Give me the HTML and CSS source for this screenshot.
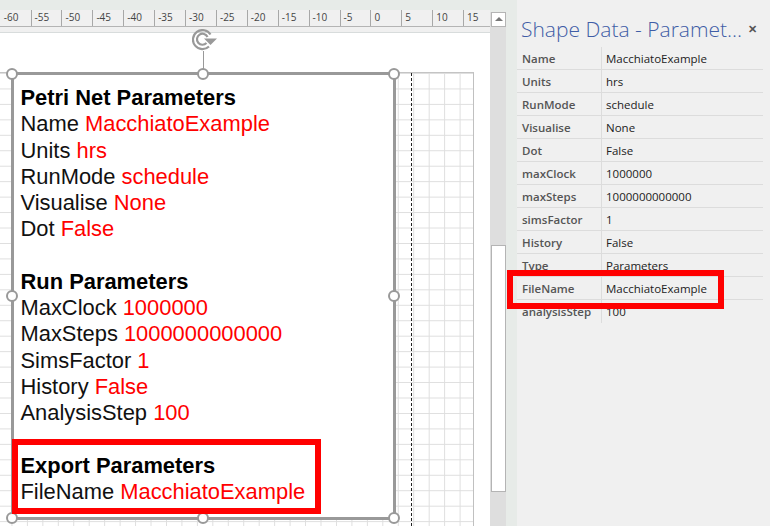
FILE: index.html
```html
<!DOCTYPE html>
<html lang="en">
<head>
    <meta charset="UTF-8">
    <title>Shape Data - Parameters</title>
    <link rel="stylesheet" href="styles.css">
</head>
<body>
    <div class="topbar"></div>
    <div class="workspace">
        <div class="editor">
            <div class="ruler">
                <span class="tick">-60</span><span class="tick">-55</span><span class="tick">-50</span><span class="tick">-45</span><span class="tick">-40</span><span class="tick">-35</span><span class="tick">-30</span><span class="tick">-25</span><span class="tick">-20</span><span class="tick">-15</span><span class="tick">-10</span><span class="tick">-5</span><span class="tick">0</span><span class="tick">5</span><span class="tick">10</span><span class="tick">15</span>
            </div>
            <div class="canvas">
                <div class="page"></div>
                <div class="margin-line"></div>
                <div class="shape">
                    <p class="head">Petri Net Parameters</p>
                    <p>Name <span class="val">MacchiatoExample</span></p>
                    <p>Units <span class="val">hrs</span></p>
                    <p>RunMode <span class="val">schedule</span></p>
                    <p>Visualise <span class="val">None</span></p>
                    <p>Dot <span class="val">False</span></p>
                    <p>&nbsp;</p>
                    <p class="head">Run Parameters</p>
                    <p>MaxClock <span class="val">1000000</span></p>
                    <p>MaxSteps <span class="val">1000000000000</span></p>
                    <p>SimsFactor <span class="val">1</span></p>
                    <p>History <span class="val">False</span></p>
                    <p>AnalysisStep <span class="val">100</span></p>
                    <p>&nbsp;</p>
                    <p class="head">Export Parameters</p>
                    <p>FileName <span class="val">MacchiatoExample</span></p>
                </div>
                <svg class="rotate" width="26" height="22" viewBox="0 0 26 22">
                    <path d="M18.500 5.500A9.500 9.500 0 1 0 17 17.500" fill="none" stroke="#999" stroke-width="2.200"/>
                    <path d="M15.500 8A5.500 5.500 0 1 0 14.500 14" fill="none" stroke="#999" stroke-width="2.200"/>
                    <path d="M12 9.500h13l-6.500 6.500z" fill="#999"/>
                </svg>
                <div class="stem"></div>
                <i class="handle h1"></i><i class="handle h2"></i><i class="handle h3"></i>
                <i class="handle h4"></i><i class="handle h5"></i>
                <i class="handle h6"></i><i class="handle h7"></i><i class="handle h8"></i>
                <div class="callout callout-left"></div>
            </div>
        </div>
        <div class="scrollbar">
            <div class="scroll-up"></div>
            <div class="scroll-thumb"></div>
        </div>
        <div class="panel">
            <div class="panel-title">
                <span>Shape Data - Paramet...</span>
                <span class="close">&#10005;</span>
            </div>
            <div class="rows">
                <div class="row"><b>Name</b><span>MacchiatoExample</span></div>
                <div class="row"><b>Units</b><span>hrs</span></div>
                <div class="row"><b>RunMode</b><span>schedule</span></div>
                <div class="row"><b>Visualise</b><span>None</span></div>
                <div class="row"><b>Dot</b><span>False</span></div>
                <div class="row"><b>maxClock</b><span>1000000</span></div>
                <div class="row"><b>maxSteps</b><span>1000000000000</span></div>
                <div class="row"><b>simsFactor</b><span>1</span></div>
                <div class="row"><b>History</b><span>False</span></div>
                <div class="row"><b>Type</b><span>Parameters</span></div>
                <div class="row"><b>FileName</b><span>MacchiatoExample</span></div>
                <div class="row last"><b>analysisStep</b><span>100</span></div>
            </div>
        </div>
    </div>
    <div class="callout callout-right"></div>
</body>
</html>
```

FILE: styles.css
```css
* {
    box-sizing: border-box;
}
html, body {
    height: 100%;
}
body {
    margin: 0;
    width: 770px;
    height: 526px;
    overflow: hidden;
    position: relative;
    background-color: #e7ebe8;
    font-family: "Liberation Sans", Arial, sans-serif;
}
.topbar {
    height: 10px;
}
.workspace {
    display: flex;
    height: 516px;
}

/* ruler + drawing area */
.editor {
    width: 490px;
    display: flex;
    flex-direction: column;
}
.ruler {
    height: 17px;
    display: flex;
    margin-left: -0.3px;
    background-color: #f0f0f0;
    border-bottom: 1px solid #b4b4b4;
    flex-shrink: 0;
    overflow: hidden;
}
.tick {
    width: 30.9px;
    flex-shrink: 0;
    border-left: 1px solid #a8a8a8;
    padding-left: 3px;
    font-size: 10px;
    line-height: 15px;
    color: #444;
    font-family: "Open Sans", sans-serif;
}
.tick:first-child {
    border-left: none;
    padding-left: 4px;
}
.canvas {
    position: relative;
    flex: 1;
    background-color: #fff;
    border-top: 5px solid #f0f0f0;
    box-shadow: inset 0 1px #d8dcdc;
}
.page {
    position: absolute;
    left: -4px;
    top: 40px;
    width: 478px;
    height: 460px;
    border-top: 1px solid #c4c4c4;
    border-right: 1px solid #c0c0c0;
    background-image:
        linear-gradient(to right, #dedede 1px, transparent 1px),
        linear-gradient(to bottom, #dedede 1px, transparent 1px);
    background-size: 15.46px 15.46px;
}
.margin-line {
    position: absolute;
    left: 411px;
    top: 41px;
    width: 1px;
    height: 460px;
    background-image: repeating-linear-gradient(to bottom, #222 0 3px, transparent 3px 5px);
}
.shape {
    position: absolute;
    left: 11px;
    top: 40px;
    width: 385px;
    height: 448px;
    background-color: #fff;
    border: 3.5px solid #999;
    padding: 10px 0 0 6.5px;
    font-size: 21.9px;
    line-height: 26.25px;
    color: #111;
}
.shape p {
    margin: 0;
    white-space: nowrap;
}
.head {
    font-weight: bold;
    color: #000;
}
.val {
    color: #f00;
}
.rotate {
    position: absolute;
    left: 192px;
    top: -3px;
}
.stem {
    position: absolute;
    left: 203px;
    top: 19px;
    width: 1px;
    height: 18px;
    background-color: #999;
}
.handle {
    position: absolute;
    width: 12px;
    height: 12px;
    border-radius: 50%;
    background-color: #fff;
    border: 2px solid #999;
}
.h1 { left: 6px; top: 36px; }
.h2 { left: 197px; top: 36px; }
.h3 { left: 388px; top: 36px; }
.h4 { left: 6px; top: 258px; }
.h5 { left: 388px; top: 258px; }
.h6 { left: 6px; top: 480px; }
.h7 { left: 197px; top: 480px; }
.h8 { left: 388px; top: 480px; }
.callout {
    position: absolute;
    border: 6px solid #f00;
}
.callout-left {
    left: 12px;
    top: 407px;
    width: 309px;
    height: 75px;
}
.callout-right {
    left: 507px;
    top: 270px;
    width: 217px;
    height: 39px;
}

/* vertical scrollbar */
.scrollbar {
    width: 16px;
    background-color: #dedede;
    position: relative;
    margin-top: 2px;
}
.scroll-up {
    position: absolute;
    left: 1px;
    top: 0;
    width: 15px;
    height: 15px;
    background-color: #fff;
    border: 1px solid #b4b4b4;
}
.scroll-up::after {
    content: "";
    position: absolute;
    left: 3px;
    top: 4px;
    border-left: 4px solid transparent;
    border-right: 4px solid transparent;
    border-bottom: 4px solid #777;
}
.scroll-thumb {
    position: absolute;
    left: 1px;
    top: 233px;
    width: 15px;
    height: 247px;
    background-color: #fff;
    border: 1px solid #b4b4b4;
}

/* shape data panel */
.panel {
    margin-left: 11px;
    margin-top: -10px;
    flex: 1;
    background-color: #f0f0f0;
    padding: 10px 7px 0 0;
}
.panel-title {
    display: flex;
    justify-content: space-between;
    align-items: center;
    height: 37px;
    padding: 0 4px;
    font-family: "Open Sans", sans-serif;
    font-weight: 300;
    font-size: 21px;
    color: #3f5da6;
}
.close {
    font-size: 11px;
    font-weight: bold;
    color: #555;
    margin-right: 2px;
}
.row {
    display: flex;
    height: 23px;
    align-items: center;
    border-bottom: 1px solid #dcdcdc;
    font-family: "Open Sans", sans-serif;
    font-size: 11.5px;
    color: #222;
}
.row.last {
    border-bottom: none;
}
.row b {
    width: 85px;
    height: 100%;
    display: flex;
    align-items: center;
    padding-left: 5px;
    border-right: 1px solid #dcdcdc;
    font-weight: 600;
    color: #555;
}
.row span {
    padding-left: 4px;
}
```
